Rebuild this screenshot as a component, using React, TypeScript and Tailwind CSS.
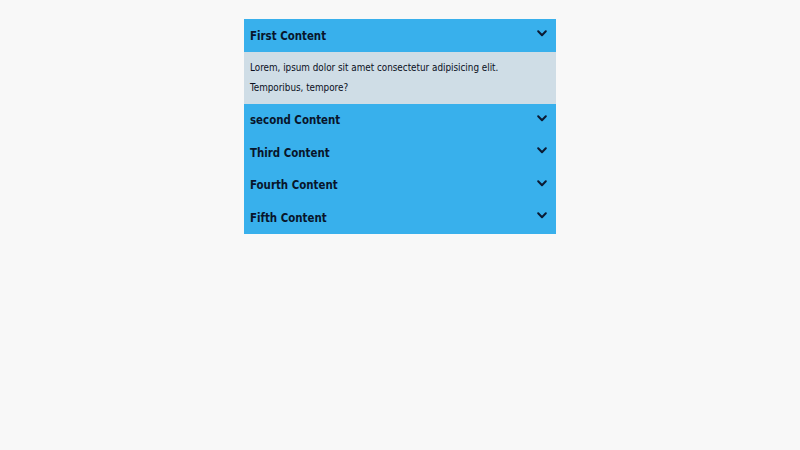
import { useState } from "react";

const items = [
  { title: "First Content", body: "Lorem, ipsum dolor sit amet consectetur adipisicing elit. Temporibus, tempore?" },
  { title: "second Content", body: "Lorem, ipsum dolor sit amet consectetur adipisicing elit. Temporibus, tempore?" },
  { title: "Third Content", body: "Lorem, ipsum dolor sit amet consectetur adipisicing elit. Temporibus, tempore?" },
  { title: "Fourth Content", body: "Lorem, ipsum dolor sit amet consectetur adipisicing elit. Temporibus, tempore?" },
  { title: "Fifth Content", body: "Lorem, ipsum dolor sit amet consectetur adipisicing elit. Temporibus, tempore?" },
];

function Chevron() {
  return (
    <svg width="10" height="7" viewBox="0 0 10 7" fill="none">
      <path d="M1.2 1.3 L5 5.2 L8.8 1.3" stroke="#0b1a33" strokeWidth="2" strokeLinecap="round" strokeLinejoin="round" />
    </svg>
  );
}

export default function App() {
  const [open, setOpen] = useState<number | null>(0);

  return (
    <div className="min-h-screen bg-[#f8f8f8] pt-[19px] font-['DejaVu_Sans_Condensed','DejaVu_Sans',sans-serif]">
      <div className="mx-auto w-[312px] bg-[#38b0ec]">
        {items.map((item, i) => (
          <div key={i}>
            <button
              type="button"
              onClick={() => setOpen(open === i ? null : i)}
              className="flex h-[32.5px] w-full items-center justify-between pl-[6px] pr-[9px] text-left"
            >
              <span className="pt-[2px] text-[11.4px] font-bold text-[#08152b]">{item.title}</span>
              <span className="-mt-[3px] flex"><Chevron /></span>
            </button>
            {open === i && (
              <div className="bg-[#cfdde6] px-[6px] py-[6px] text-[9.8px] leading-[20px] text-[#0a0f1c]">
                <p>Lorem, ipsum dolor sit amet consectetur adipisicing elit.</p>
                <p>Temporibus, tempore?</p>
              </div>
            )}
          </div>
        ))}
      </div>
    </div>
  );
}
